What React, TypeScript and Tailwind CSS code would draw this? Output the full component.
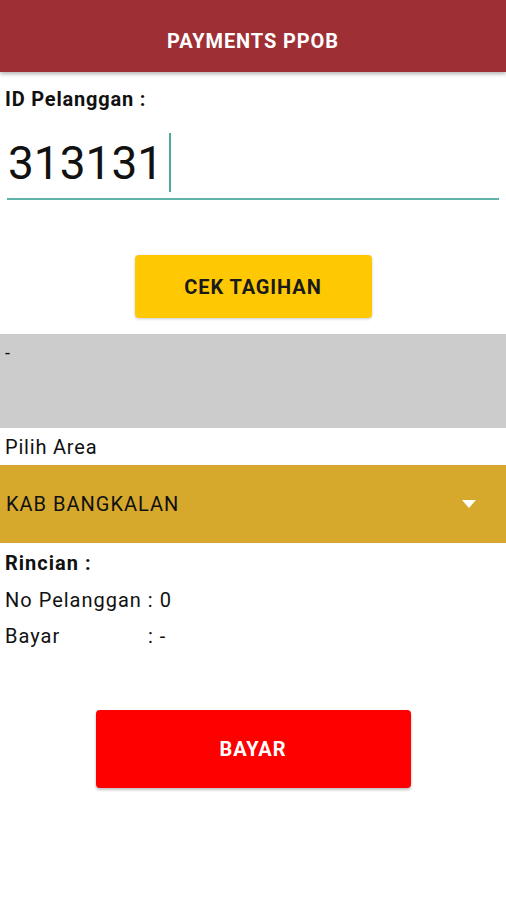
const App = () => {
  return (
    <div className="w-[506px] h-[900px] bg-white font-['Roboto',sans-serif] text-[#111]">
      <header className="h-[72px] bg-[#9e2f34] flex items-center justify-center pt-[9px] shadow-[0_2px_4px_rgba(0,0,0,0.3)]">
        <h1 className="text-white font-bold text-[20px] tracking-[0.9px]">PAYMENTS PPOB</h1>
      </header>

      <div className="px-[5px] pt-[15px] font-bold text-[20px] leading-[24px] tracking-[0.8px]">ID Pelanggan :</div>

      <div className="mx-[7px] mt-[16px] h-[73px] border-b-2 border-[#5fb3a9] flex items-start">
        <span className="text-[46px] leading-[56px] pl-[1px] pt-[8px]">313131</span>
        <span className="ml-[6px] w-[2px] h-[59px] bg-[#4fa79c] mt-[6px]" />
      </div>

      <div className="flex justify-center mt-[55px]">
        <button className="w-[237px] h-[63px] rounded-[4px] bg-[#fec803] text-[20px] font-bold tracking-[0.9px] text-[#1a1a1a] shadow-[0_1px_3px_rgba(0,0,0,0.2)]">
          CEK TAGIHAN
        </button>
      </div>

      <div className="mt-[16px] h-[94px] bg-[#cccccc] px-[5px] pt-[8px] text-[18px] leading-[22px]">-</div>

      <div className="px-[5px] pt-[7px] text-[20px] leading-[24px] tracking-[0.8px] h-[37px]">Pilih Area</div>

      <div className="h-[78px] bg-[#d6a82c] flex items-center justify-between pl-[6px] pr-[30px]">
        <span className="text-[20px] tracking-[1px]">KAB BANGKALAN</span>
        <svg width="14" height="8" viewBox="0 0 14 8">
          <path d="M0 0 L14 0 L7 8 Z" fill="#fff" />
        </svg>
      </div>

      <div className="px-[5px] pt-[8px] text-[20px] leading-[24px] tracking-[1px]">
        <div className="font-bold">Rincian :</div>
        <div className="mt-[13px]">No Pelanggan : 0</div>
        <div className="mt-[12px] flex">
          <span className="w-[143px]">Bayar</span>
          <span>: -</span>
        </div>
      </div>

      <div className="flex justify-center mt-[62px]">
        <button className="w-[315px] h-[78px] rounded-[4px] bg-[#fe0000] text-white text-[20px] font-bold tracking-[0.9px] shadow-[0_2px_3px_rgba(0,0,0,0.25)]">
          BAYAR
        </button>
      </div>
    </div>
  );
};

export default App;
